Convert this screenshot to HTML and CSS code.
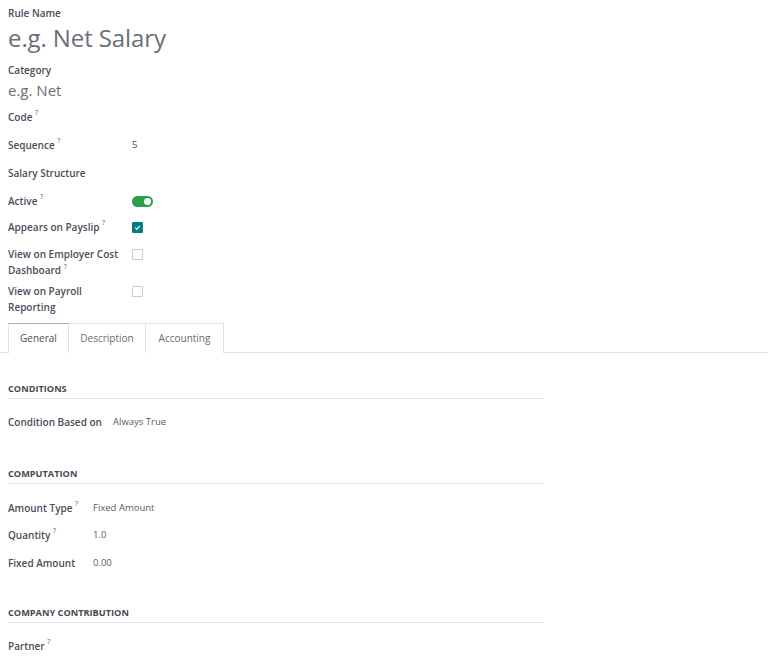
FILE: index.html
```html
<!DOCTYPE html>
<html>
<head>
<meta charset="utf-8">
<link rel="stylesheet" href="styles.css">
</head>
<body>
<div class="sheet">
  <div class="head">
    <div class="lbl">Rule Name</div>
    <div class="big ph">e.g. Net Salary</div>
    <div class="lbl cat">Category</div>
    <div class="mid ph">e.g. Net</div>
  </div>
  <div class="fields">
    <div class="lbl">Code <sup>?</sup></div><div class="val"></div>
    <div class="lbl">Sequence <sup>?</sup></div><div class="val">5</div>
    <div class="lbl">Salary Structure</div><div class="val"></div>
    <div class="lbl short">Active <sup>?</sup></div><div class="val short"><span class="toggle"><span class="knob"></span></span></div>
    <div class="lbl tall">Appears on Payslip <sup>?</sup></div><div class="val tall"><span class="cb on"><svg viewBox="0 0 10 10" width="9" height="9"><path d="M2.5 5.2 L4.3 7 L7.6 3.3" fill="none" stroke="#fff" stroke-width="1.3"/></svg></span></div>
    <div class="lbl two">View on Employer Cost Dashboard <sup>?</sup></div><div class="val two"><span class="cb"></span></div>
    <div class="lbl two last">View on Payroll Reporting</div><div class="val two last"><span class="cb"></span></div>
  </div>
  <div class="tabs">
    <div class="tab active t1">General</div>
    <div class="tab t2">Description</div>
    <div class="tab t3">Accounting</div>
  </div>
  <div class="body">
    <div class="sec s1">CONDITIONS</div>
    <div class="rows r1">
      <div class="lbl">Condition Based on</div><div class="v">Always True</div>
    </div>
    <div class="sec">COMPUTATION</div>
    <div class="rows r2">
      <div class="lbl">Amount Type <sup>?</sup></div><div class="v">Fixed Amount</div>
      <div class="lbl">Quantity <sup>?</sup></div><div class="v">1.0</div>
      <div class="lbl">Fixed Amount</div><div class="v">0.00</div>
    </div>
    <div class="sec s3">COMPANY CONTRIBUTION</div>
    <div class="rows r3">
      <div class="lbl">Partner <sup>?</sup></div><div class="v"></div>
    </div>
  </div>
</div>
</body>
</html>
```
FILE: styles.css
```css
* { box-sizing: border-box; }
html, body { margin: 0; padding: 0; background: #fff; }
body { font-family: "Open Sans", "Noto Sans", sans-serif; color: #4b4d58; font-size: 10px; overflow: hidden; }
.sheet { width: 768px; }
.head { padding: 6px 8px 0; }
.lbl { font-weight: 600; color: #4b4d58; font-size: 10px; line-height: 14px; }
.lbl sup { font-size: 7px; line-height: 7px; color: #8a8c96; font-weight: 600; vertical-align: top; position: relative; top: -1px; }
.fields .lbl.two sup { top: 1px; }
.ph { color: #6c6e78; }
.big { font-size: 24px; line-height: 32px; margin-top: 2px; letter-spacing: -0.1px; }
.cat { margin-top: 9px; }
.mid { font-size: 15px; line-height: 26px; }
.fields { display: grid; grid-template-columns: 124px 1fr; padding: 0 8px; }
.fields .lbl { padding-right: 12px; }
.fields .lbl, .fields .val { min-height: 28px; padding-top: 7px; }
.fields .short { min-height: 26px; }
.fields .tall { min-height: 31px; }
.fields .lbl.two { padding-top: 2px; min-height: 37px; line-height: 16px; }
.fields .val.two { padding-top: 3px; min-height: 37px; }
.fields .two.last { min-height: 42px; }
.val { color: #4b4d58; font-size: 9.5px; line-height: 14px; display: flex; align-items: flex-start; }
.toggle { margin-top: 2px; width: 21px; height: 11px; border-radius: 6px; background: #28a046; position: relative; display: inline-block; }
.knob { position: absolute; right: 2px; top: 2px; width: 7px; height: 7px; border-radius: 50%; background: #fff; }
.cb { width: 11px; height: 11px; border: 1px solid #c9cbd0; border-radius: 1px; display: inline-flex; align-items: center; justify-content: center; margin-top: 2px; background: #fff; }
.cb.on { background: #017e84; border-color: #017e84; }
.tabs { display: flex; padding-left: 8px; border-bottom: 1px solid #dee0e4; height: 30px; }
.tab { border: 1px solid #dee0e4; border-bottom: none; margin-bottom: -1px; line-height: 28px; color: #6a6c76; font-size: 10px; height: 30px; background: #fff; text-align: center; }
.tab + .tab { border-left: none; }
.t1 { width: 61px; }
.t2 { width: 77px; }
.t3 { width: 78px; }
.tab.active { border-top: 1px solid #b9a3b4; color: #4b4d58; }
.body { padding: 0 8px; width: 552px; }
.sec { font-weight: 700; font-size: 9.2px; color: #474952; border-bottom: 1px solid #e6e7ea; padding-bottom: 3px; line-height: 12px; }
.s1 { margin-top: 30px; }
.rows { display: grid; }
.rows .lbl, .rows .v { min-height: 27.5px; }
.r1 { grid-template-columns: 105px 1fr; margin-top: 16px; margin-bottom: 25px; }
.r2 { grid-template-columns: 85px 1fr; margin-top: 17px; }
.s3 { margin-top: 23.5px; }
.r3 { grid-template-columns: 85px 1fr; margin-top: 16px; }
.v { font-size: 9.5px; color: #5a5c66; line-height: 14px; }
```
